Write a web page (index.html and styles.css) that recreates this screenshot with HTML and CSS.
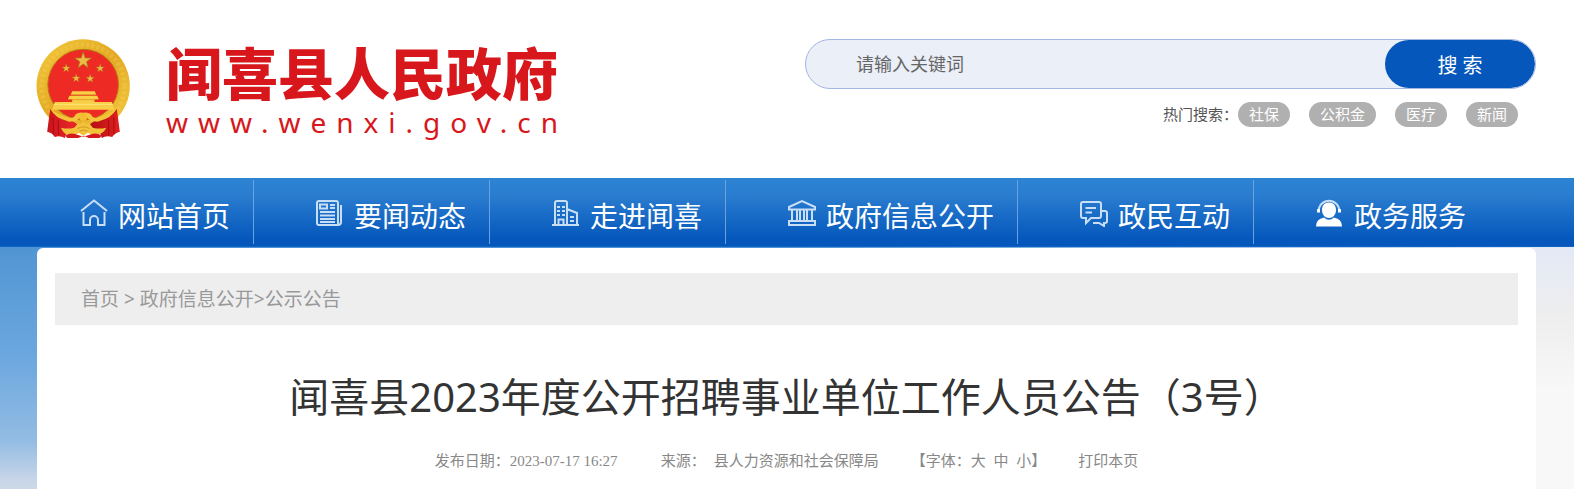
FILE: index.html
```html
<!DOCTYPE html>
<html lang="zh-CN">
<head>
  <meta charset="utf-8">
  <title>闻喜县人民政府</title>
  <link rel="stylesheet" href="styles.css">
</head>
<body>
  <header class="header">
    <a class="logo" href="#">
      <svg class="emblem" viewBox="48 56 284 300" aria-hidden="true">
        <defs>
          <linearGradient id="gold" x1="0" y1="0" x2="1" y2="1">
            <stop offset="0" stop-color="#f3c93c"/>
            <stop offset=".5" stop-color="#e3a823"/>
            <stop offset="1" stop-color="#f4cc42"/>
          </linearGradient>
          <linearGradient id="cloth" x1="0" y1="0" x2="1" y2="0">
            <stop offset="0" stop-color="#c8141a"/>
            <stop offset=".35" stop-color="#e8262a"/>
            <stop offset=".6" stop-color="#b50f14"/>
            <stop offset="1" stop-color="#e0201f"/>
          </linearGradient>
          <path id="star" d="M0-26 6-8H25L10 3 15 21 0 10-15 21-10 3-25-8H-6Z"/>
        </defs>
        <circle cx="189" cy="197" r="140" fill="url(#gold)"/>
        <circle cx="189" cy="197" r="124" fill="none" stroke="#f8dc62" stroke-width="14" stroke-dasharray="9 7" opacity=".25"/>
        <circle cx="189" cy="193" r="106" fill="#ee2a24" stroke="#b87915" stroke-width="3"/>
        <g fill="#e9bd45" stroke="#a97716" stroke-width="2">
          <use href="#star" transform="translate(189 121)"/>
          <use href="#star" transform="translate(138 144) scale(.5)"/>
          <use href="#star" transform="translate(240 144) scale(.5)"/>
          <use href="#star" transform="translate(168 174) scale(.5)"/>
          <use href="#star" transform="translate(210 175) scale(.5)"/>
        </g>
        <g fill="#f8cf46">
          <path d="M156 213H224L228 223H152ZM148 226H231L236 237H143ZM156 236H223V246H156ZM104 245H275L283 268H96Z"/>
          <path d="M154 224H226M146 238H234" stroke="#d88a1c" stroke-width="2"/>
        </g>
        <path d="M100 252H278" stroke="#fbe27a" stroke-width="3"/>
        <path d="M90 266Q108 296 153 300L178 316H203L226 300Q270 296 290 266L299 334Q284 338 276 350Q258 344 245 353L236 330H143L134 353Q118 344 104 350Q96 337 81 334Z" fill="url(#cloth)"/>
        <path d="M98 292 101 342M114 298 116 345M265 298 266 345M281 290 281 341" stroke="#a80c12" stroke-width="3" fill="none"/>
        <path d="M91 264Q113 286 152 293Q162 293 167 282Q176 274 189 277Q203 274 212 282Q217 293 227 293Q266 286 288 264Q277 294 232 304L211 302 202 294H177L168 302 147 304Q102 294 91 264Z" fill="#f4c53b"/>
        <circle cx="189" cy="290" r="12" fill="#f3bd31"/>
        <path d="M122 322Q143 327 162 322L174 308 182 312 190 305 199 312 207 308 218 322Q237 327 258 322Q250 344 218 344L203 337 190 346 176 337 161 348Q134 348 122 322Z" fill="#f2c238"/>
        <path d="M172 325Q190 314 208 325M178 333Q190 325 202 333" stroke="#d3952a" stroke-width="3" fill="none"/>
        <path d="M135 346Q153 334 174 344L190 349 206 344Q226 334 245 346L238 353H206L190 346 174 353H142Z" fill="#d41a1c"/>
      </svg>
      <span class="logo-text">
        <span class="logo-name">闻喜县人民政府</span>
        <span class="logo-url">www.wenxi.gov.cn</span>
      </span>
    </a>

    <div class="search">
      <form class="search-form">
        <input type="text" aria-label="请输入关键词" placeholder="请输入关键词">
        <button type="button">搜 索</button>
      </form>
      <div class="hot">
        <span class="hot-label">热门搜索：</span>
        <a href="#">社保</a>
        <a href="#">公积金</a>
        <a href="#">医疗</a>
        <a href="#">新闻</a>
      </div>
    </div>
  </header>

  <nav class="nav">
    <a href="#">
      <svg class="icon" viewBox="0 0 28 28"><path d="M1 12 14 1.500 27 12M3.500 13V26H10V21a4 4 0 0 1 8 0V26H24.500V13"/></svg>
      网站首页
    </a>
    <a href="#">
      <svg class="icon" viewBox="0 0 28 28"><path d="M3 2H20a2 2 0 0 1 2 2V26H3a2 2 0 0 1-2-2V4a2 2 0 0 1 2-2ZM22 26a3 3 0 0 0 3-3V6M4 5.500H11V9.500H4ZM14 6H19M14 9H19M4 13H19M4 16.500H19M4 20H19M4 23H19"/></svg>
      要闻动态
    </a>
    <a href="#">
      <svg class="icon" viewBox="0 0 28 28"><path d="M0 26H27M3 26V4a2 2 0 0 1 2-2H13a2 2 0 0 1 2 2V26M15 10 25 14V26M6.500 26V20.500H11.500V26M18 18H22M18 22H22"/><path d="M6.500 7V9M11.500 7V9M6.500 11V13M11.500 11V13M6.500 15V17M11.500 15V17" stroke-width="3"/></svg>
      走进闻喜
    </a>
    <a href="#">
      <svg class="icon" viewBox="0 0 28 28"><path d="M1 10.500V8L14 2 27 8V10.500ZM4 11V21M9 11V21M12 11V21M16 11V21M19 11V21M24 11V21M1 26V22H27V26Z"/></svg>
      政府信息公开
    </a>
    <a href="#">
      <svg class="icon" viewBox="0 0 28 28"><path d="M3 3H19a2 2 0 0 1 2 2V17a2 2 0 0 1-2 2H11L6 24V19H3a2 2 0 0 1-2-2V5a2 2 0 0 1 2-2ZM5.500 9H16M5.500 13.500H12M21 12H25a2 2 0 0 1 2 2V22a2 2 0 0 1-2 2H24V27L19 24H13"/></svg>
      政民互动
    </a>
    <a href="#">
      <svg class="icon" viewBox="0 0 28 28"><path d="M2.500 13C3-2 23-2 23.500 13" /><path class="solid" d="M13 3.500c4.500 0 7 3 7 7.500s-3 8-7 8-7-3.500-7-8 2.500-7.500 7-7.500ZM1 13.500V10H4V13.500ZM22 13.500V10H25V13.500ZM0 27.500Q0 20 8 18.500Q13 23 18 18.500Q26 20 26 27.500Z"/></svg>
      政务服务
    </a>
  </nav>

  <main class="page">
    <article class="content">
      <div class="breadcrumb">
        <a href="#">首页</a> &gt; <a href="#">政府信息公开</a>&gt;<a href="#">公示公告</a>
      </div>
      <h1>闻喜县2023年度公开招聘事业单位工作人员公告（3号）</h1>
      <div class="meta">
        <span class="date">发布日期：2023-07-17 16:27</span>
        <span class="source"><span>来源：</span><span>县人力资源和社会保障局</span></span>
        <span class="font-size">【字体：<a href="#">大</a> <a href="#">中</a> <a href="#">小</a>】</span>
        <a href="#">打印本页</a>
      </div>
    </article>
  </main>
</body>
</html>
```
FILE: styles.css
```css
:root {
  --blue: #0557bc;
  --red: #d7171b;
  --font: "Noto Sans", "Noto Sans CJK SC", sans-serif;
}

* {
  margin: 0;
  padding: 0;
  box-sizing: border-box;
}

body {
  display: flex;
  flex-direction: column;
  min-height: 100vh;
  font-family: var(--font);
  background: #fff;
  color: #333;
}

a {
  color: inherit;
  text-decoration: none;
}

/* header */
.header {
  display: flex;
  justify-content: space-between;
  align-items: flex-start;
  height: 178px;
  padding: 39px 38px 0 36px;
}

.logo {
  display: flex;
  gap: 35px;
  color: var(--red);
}

.emblem {
  width: 95px;
  height: 100px;
}

.logo-text {
  display: flex;
  flex-direction: column;
  white-space: nowrap;
}

.logo-name {
  font-family: "Noto Sans CJK SC", sans-serif;
  font-size: 56px;
  font-weight: 900;
  line-height: 64px;
}

.logo-url {
  font-size: 28px;
  line-height: 38px;
  letter-spacing: 10px;
}

.search {
  flex: 0 1 731px;
}

.search-form {
  display: flex;
  height: 50px;
  background: #eaeff8;
  border: 1px solid #a3b5e3;
  border-radius: 25px;
  overflow: hidden;
}

.search-form input {
  flex: 1;
  min-width: 0;
  padding: 0 50px;
  font-family: var(--font);
  font-size: 18px;
  color: #666;
  background: transparent;
  border: none;
  outline: none;
}

.search-form input::placeholder {
  color: #666;
}

.search-form button {
  width: 150px;
  font-family: var(--font);
  font-size: 20px;
  color: #fff;
  background: var(--blue);
  border: none;
  border-radius: 24px;
  cursor: pointer;
}

.hot {
  display: flex;
  justify-content: flex-end;
  gap: 19px;
  margin-top: 13px;
  padding-right: 18px;
  font-size: 15px;
  line-height: 25px;
}

.hot-label {
  margin-right: -19px;
  color: #555;
}

.hot a {
  padding: 0 11px;
  color: #fff;
  background: #b0b0b0;
  border-radius: 13px;
}

/* main navigation */
.nav {
  display: flex;
  height: 69px;
  padding: 2px 18px 0;
  background: linear-gradient(#2d84d3, #2a7dcf 25%, #0557bc 90%, #0557bc);
  border-bottom: 1px solid #0f63c6;
}

.nav a {
  display: flex;
  gap: 10px;
  height: 64px;
  padding: 0 23px 0 62px;
  border-right: 1px solid #6aa1df;
  font-size: 28px;
  line-height: 72px;
  color: #fff;
  white-space: nowrap;
}

.nav a:last-child {
  border-right: none;
}

.icon {
  width: 28px;
  height: 28px;
  margin-top: 19px;
  fill: none;
  stroke: #c8def5;
  stroke-width: 2;
}

.icon .solid {
  fill: #fff;
  stroke: none;
}

/* article */
.page {
  flex: 1;
  display: flex;
  padding: 1px 38px 0 37px;
  background:
    linear-gradient(to right, transparent 50%, #e3e9f5) top / 100% 1px no-repeat,
    linear-gradient(#5095d3, #5095d3) top / 100% 1px no-repeat,
    linear-gradient(#5095d3, #6ca7df 45%, #92bce3 80%, #c7d5e8 96%, #ced9e7) left / 50% 100% no-repeat,
    linear-gradient(#e3e9f5, #eeeeef 28%, #f8f8f8 60%, #f8f8f8) right / 50% 100% no-repeat;
}

.content {
  flex: 1;
  padding: 25px 18px 16px;
  background: #fff;
  border-radius: 6px 6px 0 0;
}

.breadcrumb {
  padding: 0 26px;
  font-size: 19px;
  line-height: 52px;
  color: #999;
  background: #eee;
}

h1 {
  margin-top: 42px;
  font-size: 40px;
  font-weight: 400;
  line-height: 60px;
  text-align: center;
}

.meta {
  display: flex;
  justify-content: center;
  gap: 32px;
  margin-top: 22px;
  font-family: "Liberation Serif", "Noto Sans CJK SC", serif;
  font-size: 15px;
  line-height: 24px;
  color: #888;
}

.date {
  min-width: 194px;
}

.source {
  display: flex;
  gap: 8px;
}

.font-size a {
  margin-right: 4px;
}

.font-size a:last-child {
  margin-right: 0;
}
```
